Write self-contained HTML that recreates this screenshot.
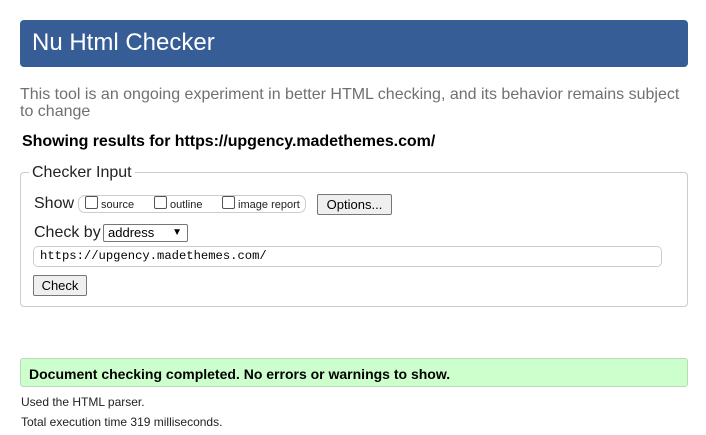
<!DOCTYPE html>
<html><head><style>
body{margin:0;width:706px;height:435px;background:#fff;font-family:"Liberation Sans",Arial,sans-serif;position:relative;overflow:hidden}
.a{position:absolute;white-space:nowrap}
.cb{display:inline-block;width:11px;height:11px;border:1px solid #555;border-radius:2px;vertical-align:-1px;background:#fff}
.btn{position:absolute;background:#efefef;border:1px solid #767676;border-radius:2px;font-size:13px;color:#000;box-sizing:border-box;text-align:center}
</style></head><body>
<div class="a" style="left:20px;top:20px;width:668px;height:47px;background:#365d95;border-radius:4px"></div>
<div class="a" style="left:32px;top:29px;font-size:24px;color:#fff">Nu Html Checker</div>
<div class="a" style="left:20px;top:86px;font-size:16px;color:#707070;line-height:17px">This tool is an ongoing experiment in better HTML checking, and its behavior remains subject<br>to change</div>
<div class="a" style="left:22px;top:133px;font-size:16px;font-weight:bold;color:#000;letter-spacing:-0.05px">Showing results for https://upgency.madethemes.com/</div>
<div class="a" style="left:20px;top:172px;width:668px;height:135px;border:1px solid #ccc;border-radius:4px;box-sizing:border-box"></div>
<div class="a" style="left:29px;top:164px;padding:0 3px;background:#fff;font-size:16px;color:#222">Checker Input</div>
<div class="a" style="left:34px;top:195px;font-size:16px;color:#222">Show</div>
<div class="a" style="left:78px;top:195px;width:228px;height:18px;border:1px solid #ccc;border-radius:7px;box-sizing:border-box"></div>
<div class="a" style="left:85px;top:196px;font-size:11px;color:#222"><span class="cb"></span> source</div>
<div class="a" style="left:154px;top:196px;font-size:11px;color:#222"><span class="cb"></span> outline</div>
<div class="a" style="left:222px;top:196px;font-size:11px;color:#222"><span class="cb"></span> image report</div>
<div class="btn" style="left:317px;top:194px;width:75px;height:21px;line-height:19px">Options...</div>
<div class="a" style="left:34px;top:224px;font-size:16px;color:#222">Check by</div>
<div class="a" style="left:103px;top:224px;width:85px;height:18px;border:1px solid #767676;border-radius:2px;box-sizing:border-box;font-size:13px;line-height:16px;padding-left:4px">address<span style="position:absolute;right:5px;top:0;font-size:10px">&#9660;</span></div>
<div class="a" style="left:33px;top:246px;width:629px;height:21px;border:1px solid #ccc;border-radius:5px;box-sizing:border-box;font-family:'Liberation Mono',monospace;font-size:12.2px;line-height:19px;padding-left:6px">https://upgency.madethemes.com/</div>
<div class="btn" style="left:33px;top:275px;width:54px;height:21px;line-height:19px">Check</div>
<div class="a" style="left:20px;top:358px;width:668px;height:29px;background:#ccffcc;border:1px solid #b9dbb9;border-radius:3px;box-sizing:border-box"></div>
<div class="a" style="left:29px;top:366px;font-size:14px;font-weight:bold;color:#000">Document checking completed. No errors or warnings to show.</div>
<div class="a" style="left:21px;top:395px;font-size:12px;color:#222">Used the HTML parser.</div>
<div class="a" style="left:21px;top:415px;font-size:12px;color:#222">Total execution time 319 milliseconds.</div>
</body></html>
